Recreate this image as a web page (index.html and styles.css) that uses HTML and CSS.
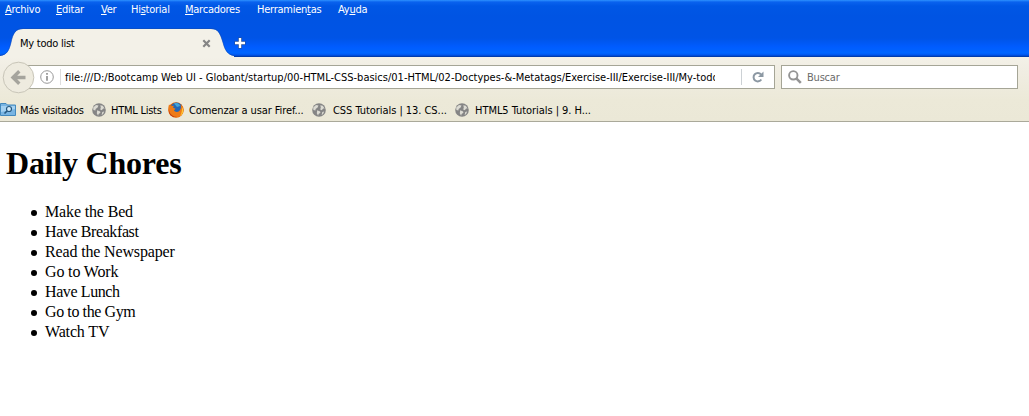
FILE: index.html
```html
<!DOCTYPE html>
<html lang="es">
<head>
<meta charset="utf-8">
<title>My todo list</title>
<link rel="stylesheet" href="styles.css">
</head>
<body>
<svg class="defs" width="0" height="0">
  <symbol id="globe" viewBox="0 0 14 14">
    <circle cx="7" cy="7" r="6.800" fill="#858585"/>
    <path d="M1.200 4.500 4 2l2.500.5L5.600 4.600 3.600 6 3.400 7.600 1.400 7zM8.300 2.200l2.500.6 1.800 2.600-1.500.2-1.300 1.600-1.600-.8.6-1.800zM5.200 7.200l2.900 1.200.3 1.300-1.800 1.400-.5 1.600-1.300-2.400zM10.300 9l1.900-.4-1.100 2.300-1.500 1z" fill="#dcdbd3"/>
  </symbol>
</svg>
<header class="titlebar">
  <nav class="menu">
    <span><u>A</u>rchivo</span><span><u>E</u>ditar</span><span><u>V</u>er</span><span>Hi<u>s</u>torial</span><span><u>M</u>arcadores</span><span>Herramien<u>t</u>as</span><span>Ay<u>u</u>da</span>
  </nav>
  <div class="tabs">
    <div class="tab">
      <svg class="tab-shape" width="240" height="29" viewBox="0 0 240 29">
        <path d="M0 28C7 27 9 23 11 15 13 5 16 1 23 1H211C218 1 220 5 223 15 225 23 228 27 234 28V29H0z" fill="#f3f1e8"/>
        <path d="M0 27.500C7 26.500 9 22.500 11 14.500 13 4.500 16 .5 23 .5H211C218 .5 220 4.500 223 14.500 225 22.500 228 26.500 234 27.500" fill="none" stroke="#114bb5" stroke-opacity=".55"/>
      </svg>
      <span class="tab-title">My todo list</span>
      <svg class="tab-close" width="9" height="9" viewBox="0 0 9 9"><path d="M1.300 1.300 7.700 7.700M7.700 1.300 1.300 7.700" stroke="#858585" stroke-width="2.200"/></svg>
    </div>
    <svg class="new-tab" width="12" height="12" viewBox="0 0 12 12"><path d="M6 .5V11.500M.5 6H11.500" stroke="#234c99" stroke-width="4"/><path d="M6 1V11M1 6H11" stroke="#fff" stroke-width="2.400"/></svg>
  </div>
</header>
<section class="toolbar">
  <div class="nav">
    <div class="urlbar">
      <svg class="back" width="33" height="33" viewBox="0 0 33 33"><circle cx="16.500" cy="16.500" r="15.300" fill="#eeebdf" stroke="#c8c5b8"/><path d="M11 16.500H23.500M17.300 10.300 11 16.500 17.300 22.700" fill="none" stroke="#a5a49d" stroke-width="3.400"/></svg>
      <svg class="info" width="14" height="14" viewBox="0 0 14 14"><circle cx="7" cy="7" r="6.300" fill="none" stroke="#999"/><path d="M7 6V10.800M7 3V4.700" stroke="#8b8b8b" stroke-width="1.600"/></svg>
      <span class="url">file:///D:/Bootcamp Web UI - Globant/startup/00-HTML-CSS-basics/01-HTML/02-Doctypes-&amp;-Metatags/Exercise-III/Exercise-III/My-todo</span>
      <span class="reload"><svg width="12" height="12" viewBox="0 0 12 12"><path d="M9.300 8.500A4.200 4.200 0 1 1 9 3.500" fill="none" stroke="#8c98a3" stroke-width="2"/><path d="M11.500.5V6H6z" fill="#8c98a3"/></svg></span>
    </div>
    <div class="search">
      <svg width="14" height="14" viewBox="0 0 14 14"><circle cx="5.300" cy="5.300" r="4.200" fill="none" stroke="#949494" stroke-width="1.900"/><path d="M8.300 8.300 12.800 12.800" stroke="#949494" stroke-width="2.600"/></svg>
      <span>Buscar</span>
    </div>
  </div>
  <div class="bookmarks">
    <svg width="16" height="15" viewBox="0 0 16 15"><path d="M.5 1.500H6L7.500 3H15.500V13.500H.5z" fill="#78b4e2" stroke="#4389bd"/><path d="M1 4H15V7L1 10z" fill="#a4d1f1"/><path d="M4.500 11.500 7.500 8.500" stroke="#24577f" stroke-width="1.600"/><circle cx="9" cy="7" r="2.500" fill="#d5edfc" stroke="#24577f" stroke-width="1.200"/></svg>
    <span class="b1">Más visitados</span>
    <svg width="14" height="14"><use href="#globe"/></svg>
    <span class="b2">HTML Lists</span>
    <svg width="16" height="16" viewBox="0 0 16 16"><circle cx="8" cy="8" r="7.700" fill="#e66000"/><circle cx="8.500" cy="6.300" r="5.800" fill="#2467b5"/><path d="M6 1.500C9 .2 12 2 12 4L9 5z" fill="#42a6da"/><path d="M1 2.500 3 4 6 3.800 5 5.600 7.500 6.700 6 8.200C7 10.500 11 10.500 12 8 13.500 6 13 4 12.500 2.800 16 5 16.500 10 13.500 13 10 16.500 4 15.500 1.500 12 .2 9 .1 5 1 2.500z" fill="#ee7b16"/><path d="M14 5C16 8 15.500 12 12 14 14 11 14 8 14 5z" fill="#ffcb35"/><path d="M1 7C1 12 5 15 9 14.500 4 16 0 12 1 7z" fill="#b52c12"/></svg>
    <span class="b3">Comenzar a usar Firef...</span>
    <svg width="14" height="14"><use href="#globe"/></svg>
    <span class="b4">CSS Tutorials | 13. CS...</span>
    <svg width="14" height="14"><use href="#globe"/></svg>
    <span class="b5">HTML5 Tutorials | 9. H...</span>
  </div>
</section>
<main>
  <h1>Daily Chores</h1>
  <ul>
    <li>Make the Bed</li>
    <li class="tight">Have Breakfast</li>
    <li>Read the Newspaper</li>
    <li>Go to Work</li>
    <li class="tight">Have Lunch</li>
    <li class="tight">Go to the Gym</li>
    <li>Watch TV</li>
  </ul>
</main>
</body>
</html>
```
FILE: styles.css
```css
* { box-sizing: border-box; }
body { margin: 0; height: 416px; overflow: hidden; background: #fff; color: #000; font: 11px/14px "DejaVu Sans Condensed", "DejaVu Sans", sans-serif; font-stretch: condensed; letter-spacing: -0.25px; white-space: nowrap; }
svg { display: block; flex: none; }
.defs { position: absolute; }
.titlebar { height: 57px; background: linear-gradient(#2d91ff 0, #0a62ee 2px, #0057e5 6px, #0054e3 16px, #0054e6 38px, #005cff 47px, #0066ff 53px, #0055ed 55px, #003499 57px); }
.menu { height: 28px; padding: 3px 0 0 5px; display: grid; grid-template-columns: 51px 45px 30px 54px 72px 81px 50px; color: #fff; }
.menu u { text-underline-offset: 1px; text-decoration-thickness: 1px; }
.tabs { display: flex; height: 29px; }
.tab { width: 234px; height: 29px; display: flex; position: relative; }
.tab-shape { position: absolute; left: 0; top: 0; }
.tab-title { position: relative; width: 182px; margin: 9px 0 0 20px; }
.tab-close { position: relative; margin-top: 11px; }
.new-tab { margin-top: 9px; }
.toolbar { height: 65px; background: linear-gradient(#f3f1e8 0, #f1eee4 10px, #ece9d8 43px, #ebe8d7 100%); border-bottom: 1px solid #aaa99a; }
.nav { display: flex; gap: 6px; padding: 8px 0 0 17px; height: 41px; }
.urlbar { width: 758px; height: 24px; display: flex; align-items: center; background: #fff; border: 1px solid #a5a596; }
.back { margin-left: -16px; }
.info { margin-left: 5px; }
.url { margin-left: 6px; padding: 1px 0 0 4px; border-left: 1px solid #ddd; width: 655px; overflow: hidden; line-height: 15px; letter-spacing: 0; }
.reload { margin-left: 26px; width: 33px; height: 16px; display: flex; align-items: center; justify-content: center; border-left: 1px solid #ccd1d5; }
.search { width: 237px; height: 24px; display: flex; align-items: center; gap: 5px; padding-left: 6px; border: 1px solid #a5a596; background: #fff; color: #6b6b6b; }
.search span { padding-top: 2px; letter-spacing: -0.2px; }
.bookmarks { display: flex; align-items: center; height: 23px; }
.bookmarks span { padding-top: 2px; }
.b1 { width: 72px; margin-left: 4px; }
.b2 { width: 52px; margin-left: 5px; margin-right: 5px; }
.b3 { width: 117px; margin-left: 5px; margin-right: 6px; letter-spacing: -0.1px; }
.b4 { width: 116px; margin-left: 7px; margin-right: 6px; letter-spacing: -0.05px; }
.b5 { margin-left: 6px; letter-spacing: -0.05px; }
main { font-family: "Liberation Serif", serif; font-size: 16px; line-height: 20px; letter-spacing: -0.15px; padding-left: 5px; }
h1 { margin: 23px 0 20px 1px; font-size: 32px; line-height: 37px; letter-spacing: -0.22px; }
ul { margin: 0; padding-left: 26px; list-style: none; }
li { display: flex; align-items: center; }
li::before { content: ""; width: 6px; height: 6px; margin: 1px 8px 0 0; border-radius: 50%; background: #000; }
.tight { letter-spacing: -0.4px; }
```
